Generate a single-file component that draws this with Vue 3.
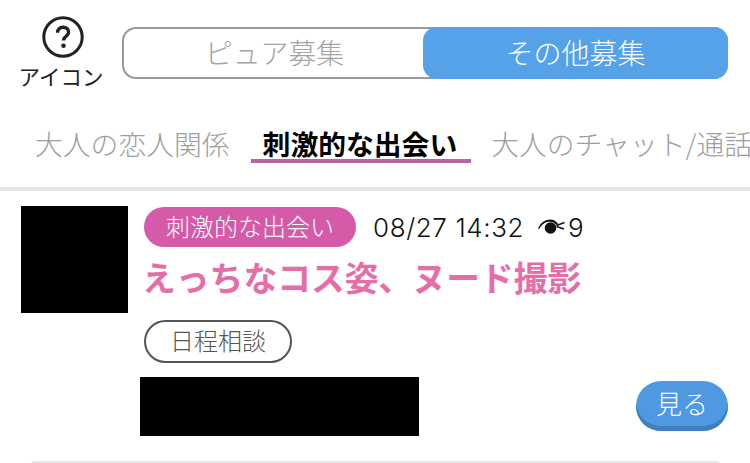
<script setup>
const tabs = [
  { label: '大人の恋人関係', active: false },
  { label: '刺激的な出会い', active: true },
  { label: '大人のチャット/通話', active: false },
]
</script>

<template>
  <div class="page">
    <header class="top">
      <div class="help">
        <svg class="help-icon" width="42" height="42" viewBox="0 0 42 42" aria-hidden="true">
          <circle cx="21" cy="21" r="19.2" fill="none" stroke="#222" stroke-width="3" />
          <path d="M15.500 16.800c0-3.400 2.300-5.600 5.600-5.600 3.200 0 5.500 2 5.500 4.800 0 2.300-1.200 3.300-2.600 4.400-1.700 1.300-2.400 2-2.400 4.100" fill="none" stroke="#222" stroke-width="3.400" />
          <circle cx="21.500" cy="29.800" r="2.300" fill="#222" />
        </svg>
        <span class="help-label">アイコン</span>
      </div>
      <div class="segment">
        <div class="seg seg-off">ピュア募集</div>
        <div class="seg seg-on">その他募集</div>
      </div>
    </header>

    <nav class="tabs">
      <span v-for="t in tabs" :key="t.label" class="tab" :class="{ active: t.active }">{{ t.label }}</span>
    </nav>

    <article class="card">
      <div class="thumb"></div>
      <div class="body">
        <div class="meta">
          <span class="badge">刺激的な出会い</span>
          <span class="date">08/27 14:32</span>
          <svg class="eye" width="28" height="16" viewBox="0 0 28 16" aria-hidden="true">
            <path d="M0 9.500C2.600 3.500 7.500 .5 12 .5c3.400 0 6 1.500 8 4.300l-1.500 1.500C16.500 3.800 14.500 2.800 12 2.800 7.500 2.800 3.500 5.500 1.200 10z" fill="#111" />
            <circle cx="12.500" cy="9" r="5.800" fill="#111" />
            <path d="M18.500 6.500 26.500 3.500M18.500 7.500 26 10" stroke="#111" stroke-width="1.700" fill="none" />
          </svg>
          <span class="count">9</span>
        </div>
        <h2 class="title">えっちなコス姿、ヌード撮影</h2>
        <span class="tag">日程相談</span>
        <div class="foot">
          <div class="mask"></div>
          <button class="view">見る</button>
        </div>
      </div>
    </article>
    <div class="next"></div>
  </div>
</template>

<style>
html, body { margin: 0; background: #fff; }
</style>

<style scoped>
.page {
  width: 750px;
  height: 463px;
  overflow: hidden;
  background: #fff;
  font-family: "Noto Sans CJK JP", sans-serif;
  font-weight: 300;
}
.top {
  display: flex;
  align-items: flex-start;
  padding: 16px 22px 0 18px;
  height: 84px;
  box-sizing: border-box;
}
.help {
  width: 86px;
  margin-right: 2px;
  display: flex;
  flex-direction: column;
  align-items: center;
  flex: none;
}
.help-icon { margin-left: 4px; }
.help-label {
  font-size: 21.500px;
  line-height: 26px;
  margin-top: 5px;
  color: #222;
  font-weight: 400;
}
.segment {
  flex: 1;
  margin: 11px 0 0 16px;
  height: 52px;
  display: flex;
  box-sizing: border-box;
  border: 2px solid #999;
  border-radius: 14px;
}
.seg {
  display: flex;
  align-items: center;
  justify-content: center;
  font-size: 28px;
  line-height: 1;
  padding-bottom: 3px;
  box-sizing: border-box;
}
.seg-off { flex: 1; color: #a4a4a4; padding-left: 2px; }
.seg-on {
  flex: none;
  width: 305px;
  color: #fff;
  background: #55a2e8;
  border-radius: 14px;
  margin: -2px -2px -2px 0;
}
.tabs {
  display: flex;
  height: 107px;
  box-sizing: border-box;
  padding: 43px 0 0 35px;
  border-bottom: 4px solid #e5e5e5;
  white-space: nowrap;
  overflow: hidden;
}
.tab {
  font-size: 27.800px;
  line-height: 32px;
  height: 36px;
  color: #9e9e9e;
  flex: none;
  box-sizing: border-box;
}
.tab.active {
  color: #000;
  font-weight: 700;
  margin: 0 20px 0 21px;
  padding: 0 14px 0 12px;
  border-bottom: 4px solid #b9649f;
}
.card {
  display: flex;
  padding: 15px 22px 0 21px;
  height: 270px;
  box-sizing: border-box;
}
.thumb {
  width: 107px;
  height: 107px;
  background: #000;
  flex: none;
}
.body {
  flex: 1;
  margin-left: 16px;
  display: flex;
  flex-direction: column;
  align-items: flex-start;
}
.meta {
  display: flex;
  align-items: center;
  height: 40px;
  margin-top: 1px;
}
.badge {
  width: 212px;
  height: 40px;
  border-radius: 20px;
  background: #d55aa8;
  color: #fff;
  font-size: 24px;
  line-height: 37px;
  text-align: center;
}
.date {
  font-family: "Inter", "Liberation Sans", sans-serif;
  font-weight: 300;
  font-size: 26px;
  color: #111;
  margin-left: 17px;
  letter-spacing: 0.6px;
}
.eye { margin-left: 14px; flex: none; }
.count {
  font-family: "Inter", "Liberation Sans", sans-serif;
  font-weight: 300;
  font-size: 26px;
  color: #111;
  margin-left: 2px;
}
.title {
  margin: 10px 0 0 -2px;
  font-size: 33.800px;
  line-height: 40px;
  font-weight: 700;
  color: #e56ea8;
  white-space: nowrap;
}
.tag {
  margin-top: 23px;
  width: 148px;
  height: 43px;
  box-sizing: border-box;
  border: 2px solid #555;
  border-radius: 22px;
  font-size: 24px;
  line-height: 35px;
  text-align: center;
  color: #555;
}
.foot {
  width: 100%;
  display: flex;
  align-items: flex-start;
  justify-content: space-between;
  margin-top: 14px;
}
.mask {
  width: 279px;
  height: 59px;
  margin-left: -4px;
  background: #000;
}
.view {
  margin-top: 4px;
  width: 92px;
  height: 50px;
  border: 0;
  padding: 0 0 6px;
  border-radius: 25px;
  background: #4f99e3;
  box-shadow: inset 0 -5px 0 #3f7fbd;
  color: #fff;
  font-family: inherit;
  font-weight: 300;
  font-size: 26px;
  line-height: 1;
}
.next {
  height: 4px;
  margin: 0 30px 0 31px;
  background: #e5e5e5;
  border-radius: 4px 4px 0 0;
}
</style>
